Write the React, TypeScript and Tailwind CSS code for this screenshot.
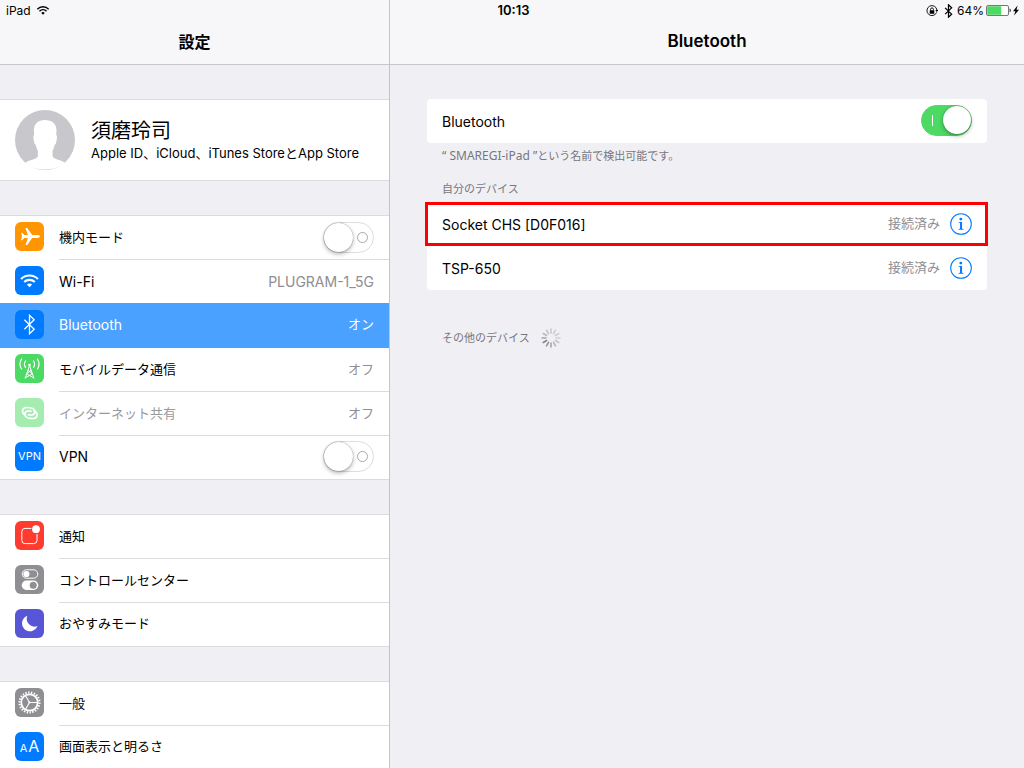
import type { ReactNode } from "react";

const SEPARATOR = "border-[#dcdce0]";

/* ---------- status bar glyphs ---------- */

function WifiGlyph({ className }: { className: string }) {
  return (
    <svg viewBox="4 7 21 16" className={className} fill="none" stroke="currentColor" strokeWidth="2.1">
      <path d="M6 13a12 12 0 0 1 17 0" />
      <path d="M9.2 16a7.6 7.6 0 0 1 10.6 0" />
      <path d="M11.9 18.6a3.8 3.8 0 0 1 5.2 0l-2.6 2.7z" fill="currentColor" stroke="none" />
    </svg>
  );
}

function BluetoothGlyph({ className, weight }: { className: string; weight: string }) {
  return (
    <svg viewBox="8 4 13 21" className={className} fill="none" stroke="currentColor" strokeWidth={weight}>
      <path d="M9.4 9.8l9.8 9.4-4.7 4.5V5.3l4.7 4.5-9.8 9.4" />
    </svg>
  );
}

function RotationLockGlyph() {
  return (
    <svg viewBox="0 0 12 12" className="size-3" fill="none" stroke="currentColor">
      <path d="M10.600 7.400A5 5 0 1 1 10.900 5" strokeWidth="0.900" />
      <path d="M9.300 5h2.900l-1.400 2z" fill="currentColor" stroke="none" />
      <path d="M4.600 5.600V4.300a1.400 1.400 0 0 1 2.800 0v1.300" strokeWidth="0.900" />
      <rect x="3.700" y="5.300" width="4.600" height="3.400" rx="0.400" fill="currentColor" stroke="none" />
    </svg>
  );
}

function BatteryGlyph() {
  return (
    <svg viewBox="0 0 35 11" className="h-[11px] w-[35px]">
      <rect x="0.5" y="0.5" width="22" height="10" rx="1.5" fill="#fff" stroke="#777" />
      <rect x="1.2" y="1.2" width="14" height="8.6" rx="0.6" fill="#4cd964" />
      <path d="M23.6 3.6c1.6.3 1.6 3.5 0 3.8z" fill="#222" />
      <path d="M31.6 0.6l-4.6 5.6h2.4l-1.400 4.400 5-5.800h-2.500z" fill="#000" />
    </svg>
  );
}

function StatusBar() {
  return (
    <div className="absolute inset-x-0 top-0 z-10 flex h-[21px] items-center justify-between pl-1.5 pr-[3px] text-xs">
      <div className="flex flex-1 items-center gap-[5px]">
        <span>iPad</span>
        <WifiGlyph className="h-[11px] w-[14px]" />
      </div>
      <time className="text-[13px] font-semibold">10:13</time>
      <div className="flex flex-1 items-center justify-end">
        <RotationLockGlyph />
        <BluetoothGlyph className="ml-1.5 h-[14px] w-[9px]" weight="1.9" />
        <span className="ml-1 mr-0.5">64%</span>
        <BatteryGlyph />
      </div>
    </div>
  );
}

/* ---------- settings icons, all on a 29pt grid ---------- */

function IconTile({ color, children }: { color: string; children: ReactNode }) {
  return (
    <span className={`mb-[3px] flex size-[29px] shrink-0 items-center justify-center rounded-md text-white ${color}`}>
      {children}
    </span>
  );
}

function Glyph({ children }: { children: ReactNode }) {
  return (
    <svg viewBox="0 0 29 29" className="size-[29px]" fill="none" stroke="currentColor">
      {children}
    </svg>
  );
}

const icons = {
  airplane: (
    <IconTile color="bg-[#ff9500]">
      <Glyph>
        <path
          d="M25 14.5c0-.9-1.3-1.4-2.6-1.4h-5.2l-5-7.2h-1.7l2.4 7.2H9.2l-1.9-2.3H6l1 3.7-1 3.7h1.3l1.9-2.3h3.7l-2.4 7.2h1.7l5-7.2h5.2c1.3 0 2.6-.5 2.6-1.4z"
          fill="currentColor"
          stroke="none"
        />
      </Glyph>
    </IconTile>
  ),
  wifi: (
    <IconTile color="bg-[#007aff]">
      <WifiGlyph className="h-4 w-[21px]" />
    </IconTile>
  ),
  bluetooth: (
    <IconTile color="bg-[#007aff]">
      <BluetoothGlyph className="h-[21px] w-[13px]" weight="1.3" />
    </IconTile>
  ),
  cellular: (
    <IconTile color="bg-[#4cd964]">
      <Glyph>
        <path d="M14.5 11.500l-4.500 13M14.5 11.500l4.500 13M13 16.200l4.400 3.600-7 4M16 16.200l-4.400 3.600 7 4" />
        <circle cx="14.5" cy="11" r="1.3" fill="currentColor" stroke="none" />
        <path d="M10.800 6.500a6 6 0 0 0 0 7.400M18.200 6.500a6 6 0 0 1 0 7.400" strokeWidth="1.2" />
        <path d="M6.800 4.600a9.500 9.500 0 0 0 0 10.800M22.200 4.600a9.500 9.500 0 0 1 0 10.800" strokeWidth="1.2" />
      </Glyph>
    </IconTile>
  ),
  hotspot: (
    <IconTile color="bg-[#a5ecb1]">
      <Glyph>
        <g strokeWidth="1.7" strokeLinecap="round">
          <path d="M10.500 16.800A3.700 3.700 0 0 1 10.300 9.600c2-.2 4.200 0 6 .4 2.700.700 4.200 2.700 3.400 4.900-.6 1.600-2.200 2.300-4 2.100l-2-.2" />
          <path d="M19.100 13.200a3.700 3.700 0 0 1 .2 7.200c-2 .2-4.200 0-6-.4-2.700-.7-4.200-2.700-3.400-4.900.6-1.600 2.200-2.300 4-2.100l2 .2" />
        </g>
      </Glyph>
    </IconTile>
  ),
  vpn: (
    <IconTile color="bg-[#007aff]">
      <span className="text-[11px]">VPN</span>
    </IconTile>
  ),
  notifications: (
    <IconTile color="bg-[#ff3b30]">
      <Glyph>
        <path d="M16.4 7.400H10A3.200 3.200 0 0 0 6.800 10.600v8.800A3.200 3.200 0 0 0 10 22.600h8.800a3.200 3.200 0 0 0 3.200-3.200v-6.400" />
        <circle cx="21" cy="8.2" r="3.9" fill="currentColor" stroke="none" />
      </Glyph>
    </IconTile>
  ),
  controlCenter: (
    <IconTile color="bg-[#8e8e93]">
      <Glyph>
        <rect x="7.2" y="4.8" width="15.6" height="8.4" rx="4.2" />
        <circle cx="11.4" cy="9" r="3.1" fill="currentColor" stroke="none" />
        <rect x="6.7" y="15.6" width="16.6" height="9.4" rx="4.7" fill="currentColor" stroke="none" />
        <circle cx="18.2" cy="20.3" r="3.5" fill="#8e8e93" stroke="none" />
      </Glyph>
    </IconTile>
  ),
  moon: (
    <IconTile color="bg-[#5856d6]">
      <Glyph>
        <path d="M12.3 6.8a8 8 0 1 0 10.2 10.3 7.9 7.9 0 0 1-10.2-10.3z" fill="currentColor" stroke="none" />
      </Glyph>
    </IconTile>
  ),
  gear: (
    <IconTile color="bg-[#8e8e93]">
      <Glyph>
        <circle cx="14.5" cy="14.5" r="8.200" strokeWidth="1.700" />
        <circle cx="14.5" cy="14.5" r="10" strokeWidth="2.200" pathLength="44" strokeDasharray="1 1" />
        <path d="M14.5 14.5H22M14.5 14.5L10.7 8M14.5 14.5L10.7 21" strokeWidth="1.1" />
        <circle cx="14.5" cy="14.5" r="1.1" fill="currentColor" stroke="none" />
      </Glyph>
    </IconTile>
  ),
  display: (
    <IconTile color="bg-[#007aff]">
      <span className="mb-px flex items-baseline gap-px leading-none">
        <span className="text-[11px] leading-none">A</span>
        <span className="text-base leading-none">A</span>
      </span>
    </IconTile>
  ),
};

/* ---------- controls ---------- */

function Switch({ id, on = false }: { id: string; on?: boolean }) {
  return (
    <input
      id={id}
      type="checkbox"
      role="switch"
      defaultChecked={on}
      className="relative mb-px h-[31px] w-[51px] shrink-0 appearance-none rounded-full border border-[#dddddf] bg-white before:absolute before:left-0 before:top-0 before:size-[29px] before:rounded-full before:bg-white before:shadow-[0_2px_4px_rgba(0,0,0,0.3),0_0_1px_rgba(0,0,0,0.5)] after:absolute after:right-[5px] after:top-[9px] after:size-[11px] after:rounded-full after:border after:border-[#a8a8a8] checked:border-[#4cd964] checked:bg-[#4cd964] checked:before:left-[21px] checked:before:top-0 checked:before:size-[28px] checked:after:left-[10px] checked:after:right-auto checked:after:h-[11px] checked:after:w-px checked:after:border-0 checked:after:bg-white"
    />
  );
}

type Row = {
  id: string;
  icon: ReactNode;
  label: string;
  latin?: boolean;
  value?: string;
  toggle?: boolean;
  active?: boolean;
  disabled?: boolean;
};

const groups: Row[][] = [
  [
    { id: "airplane", icon: icons.airplane, label: "機内モード", toggle: true },
    { id: "wifi", icon: icons.wifi, label: "Wi-Fi", latin: true, value: "PLUGRAM-1_5G" },
    { id: "bluetooth", icon: icons.bluetooth, label: "Bluetooth", latin: true, value: "オン", active: true },
    { id: "cellular", icon: icons.cellular, label: "モバイルデータ通信", value: "オフ" },
    { id: "hotspot", icon: icons.hotspot, label: "インターネット共有", value: "オフ", disabled: true },
    { id: "vpn", icon: icons.vpn, label: "VPN", latin: true, toggle: true },
  ],
  [
    { id: "notifications", icon: icons.notifications, label: "通知" },
    { id: "control-center", icon: icons.controlCenter, label: "コントロールセンター" },
    { id: "dnd", icon: icons.moon, label: "おやすみモード" },
  ],
  [
    { id: "general", icon: icons.gear, label: "一般" },
    { id: "display", icon: icons.display, label: "画面表示と明るさ" },
  ],
];

function SettingsRow({ row, last, beforeActive }: { row: Row; last: boolean; beforeActive: boolean }) {
  const size = row.latin ? "text-sm" : "text-[13px]";
  const labelColor = row.active ? "text-white" : row.disabled ? "text-[#9a9a9e]" : "text-black";
  const valueColor = row.active ? "text-white" : "text-[#8e8e93]";
  const line = last || row.active || beforeActive ? "border-transparent" : SEPARATOR;
  const height = row.active ? "-mt-px h-[45px] bg-[#4aa1ff]" : "h-11";
  const shell = `flex items-center gap-[15px] pl-[15px] ${height} ${last ? `border-b ${SEPARATOR}` : ""}`;
  const inner = `flex h-full flex-1 items-center justify-between border-b pr-[15px] ${line}`;

  if (row.toggle) {
    return (
      <li className={shell}>
        {row.icon}
        <div className={inner}>
          <label htmlFor={row.id} className={`${size} ${labelColor}`}>
            {row.label}
          </label>
          <Switch id={row.id} />
        </div>
      </li>
    );
  }

  return (
    <li>
      <a href={`#${row.id}`} className={shell}>
        {row.icon}
        <span className={inner}>
          <span className={`${size} ${labelColor}`}>{row.label}</span>
          {row.value && (
            <span className={`${row.id === "wifi" ? "text-sm" : "text-[13px]"} ${valueColor}`}>{row.value}</span>
          )}
        </span>
      </a>
    </li>
  );
}

function Avatar() {
  return (
    <svg viewBox="0 0 60 60" className="mb-px size-[60px] shrink-0">
      <circle cx="30" cy="30" r="30" fill="#c7c7cc" />
      <path
        d="M30 10C37 10 41.500 14 41.500 20.500L41.200 25C42.400 25.200 42 28 41.600 30.500C41.200 33 40.600 34.600 39.600 34.800C39.200 37.500 38.200 39.500 37.500 41L37.600 46.500C40 50 46 49.500 50 52.800C45 57.500 38 59.500 30 59.500C22 59.500 15 57.500 10.300 53C14 49.500 20.500 50 22.800 46.500L22.900 41C22.100 39.500 21.200 37.500 20.800 34.800C19.800 34.600 19.200 33 18.800 30.500C18.400 28 18 25.200 19.200 25L18.900 20.500C18.900 14 23 10 30 10Z"
        fill="#fff"
      />
    </svg>
  );
}

function Sidebar() {
  return (
    <aside className="flex w-[390px] shrink-0 flex-col border-r border-[#c4c4ca]">
      <header className="flex h-[65px] shrink-0 items-center justify-center border-b border-[#c8c7cc] bg-[#f7f7f9] pt-5">
        <h1 className="text-base font-bold">設定</h1>
      </header>
      <nav className="flex min-h-0 flex-1 flex-col gap-[34px] overflow-y-auto pt-[34px] [scrollbar-width:none]">
        <a
          href="#account"
          className={`flex h-[82px] shrink-0 items-center gap-4 border-y bg-white pl-[15px] ${SEPARATOR}`}
        >
          <Avatar />
          <span className="flex flex-col pt-0.5">
            <span className="text-xl leading-6">須磨玲司</span>
            <span className="text-[13px] leading-5">Apple ID、iCloud、iTunes StoreとApp Store</span>
          </span>
        </a>
        {groups.map((rows) => (
          <ul key={rows[0].id} className={`shrink-0 border-t bg-white ${SEPARATOR}`}>
            {rows.map((row, i) => (
              <SettingsRow
                key={row.id}
                row={row}
                last={i === rows.length - 1}
                beforeActive={Boolean(rows[i + 1]?.active)}
              />
            ))}
          </ul>
        ))}
      </nav>
    </aside>
  );
}

/* ---------- detail pane ---------- */

function InfoButton({ device }: { device: string }) {
  return (
    <button type="button" aria-label={`${device} 詳細`} className="text-[#007aff]">
      <svg viewBox="0 0 23 23" className="size-[22px]" fill="none" stroke="currentColor">
        <circle cx="11.5" cy="11.5" r="10.8" strokeWidth="1.1" />
        <circle cx="11.3" cy="6.4" r="1.5" fill="currentColor" stroke="none" />
        <path d="M9 9.600l3.600-.4v7.200l1.500.3v.7H9v-.7l1.500-.3v-6L9 10.200z" fill="currentColor" stroke="none" />
      </svg>
    </button>
  );
}

// Petal opacities, clockwise from the top
const petals = [0.35, 0.3, 0.28, 0.26, 0.35, 0.5, 0.65, 0.8, 0.9, 0.6, 0.45, 0.4];

function Spinner() {
  return (
    <svg viewBox="0 0 20 20" className="size-5" stroke="#77777c" strokeWidth="1.5" strokeLinecap="round">
      {petals.map((opacity, i) => (
        <line key={i} x1="10" y1="1" x2="10" y2="5" opacity={opacity} transform={`rotate(${i * 30} 10 10)`} />
      ))}
    </svg>
  );
}

const devices = [
  { name: "Socket CHS [D0F016]", highlighted: true },
  { name: "TSP-650", highlighted: false },
];

function BluetoothPane() {
  return (
    <main className="flex min-w-0 flex-1 flex-col">
      <header className="flex h-[65px] shrink-0 items-center justify-center border-b border-[#c8c7cc] bg-[#f7f7f9] pt-5">
        <h2 className="text-[17px] font-semibold">Bluetooth</h2>
      </header>
      <div className="px-[37px] pt-[34px] text-[#77777c]">
        <div className="flex h-11 items-center justify-between rounded-[4px] bg-white px-[15px] text-black">
          <label htmlFor="bluetooth-power" className="pt-px text-sm">
            Bluetooth
          </label>
          <Switch id="bluetooth-power" on />
        </div>
        <p className="mt-1 px-[15px] text-[11px] leading-[18px]">
          <span className="font-['Noto_Sans','Noto_Sans_CJK_JP',sans-serif] text-xs leading-[18px]">
            “ SMAREGI-iPad ”
          </span>
          という名前で検出可能です。
        </p>
        <h3 className="mt-[15px] px-[15px] text-[11px] leading-[18px]">自分のデバイス</h3>
        <ul className="mt-1 rounded-[4px] bg-white text-black">
          {devices.map((device) => (
            <li key={device.name} className="relative flex h-11 items-center px-[15px]">
              <span className="flex-1 pt-px text-sm">{device.name}</span>
              <span className="mr-2.5 text-[13px] text-[#8e8e93]">接続済み</span>
              <InfoButton device={device.name} />
              {device.highlighted && (
                <span className="pointer-events-none absolute inset-y-0 -left-0.5 -right-px border-[3px] border-[#f00]" />
              )}
            </li>
          ))}
        </ul>
        <div className="mt-[38px] flex items-center gap-[11px] px-[15px]">
          <h3 className="text-[11px]">その他のデバイス</h3>
          <Spinner />
        </div>
      </div>
    </main>
  );
}

export default function App() {
  return (
    <div className="relative flex h-screen overflow-hidden bg-[#efeff4] font-['Inter','Noto_Sans_CJK_JP',sans-serif] text-black">
      <StatusBar />
      <Sidebar />
      <BluetoothPane />
    </div>
  );
}
